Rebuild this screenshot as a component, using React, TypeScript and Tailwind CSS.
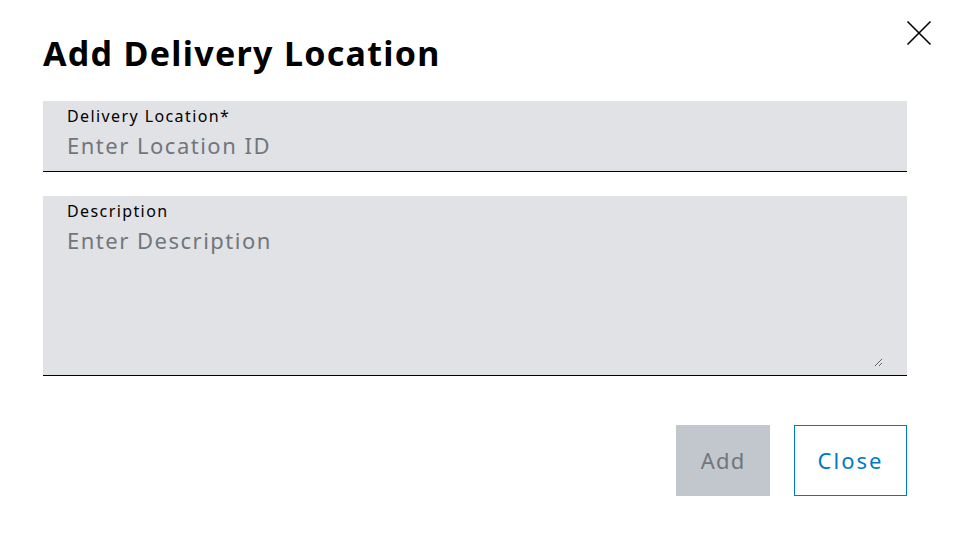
export default function App() {
  return (
    <div className="relative h-[535px] w-[953px] bg-white font-['Noto_Sans',sans-serif] text-black">
      <button className="absolute left-[906px] top-[20px]">
        <svg width="26" height="26" viewBox="0 0 26 26" fill="none" stroke="black" strokeWidth="1.6">
          <path d="M1.5 1.5 L24.5 24.5 M24.5 1.5 L1.5 24.5" />
        </svg>
      </button>
      <div className="pl-[43px] pr-[46px] pt-[31px]">
        <h1 className="text-[34px] font-bold leading-[44px] tracking-[1.3px]">
          Add Delivery Location
        </h1>

        <div className="mt-[26px] flex h-[71px] flex-col border-b border-black bg-[#e0e2e5] px-6 pt-[4px]">
          <label className="text-[16px] leading-[22px] tracking-[1.4px]">Delivery Location*</label>
          <input
            className="mt-[3px] bg-transparent text-[22px] leading-[30px] tracking-[1.5px] text-black outline-none placeholder:text-[#71767c]"
            placeholder="Enter Location ID"
          />
        </div>

        <div className="mt-[24px] flex h-[180px] flex-col border-b border-black bg-[#e0e2e5] px-6 pt-[4px]">
          <label className="text-[16px] leading-[22px] tracking-[1.4px]">Description</label>
          <textarea
            className="mb-[8px] mt-[3px] flex-1 resize-y bg-transparent text-[22px] leading-[30px] tracking-[1.5px] outline-none placeholder:text-[#71767c]"
            placeholder="Enter Description"
          />
        </div>

        <div className="mt-[49px] flex justify-end gap-6">
          <button className="h-[71px] w-[94px] bg-[#c1c7cc] text-[22px] tracking-[1.2px] text-[#71767c]">
            Add
          </button>
          <button className="h-[71px] w-[113px] border border-[#007bc0] text-[22px] tracking-[2px] text-[#007bc0]">
            Close
          </button>
        </div>
      </div>
    </div>
  );
}
